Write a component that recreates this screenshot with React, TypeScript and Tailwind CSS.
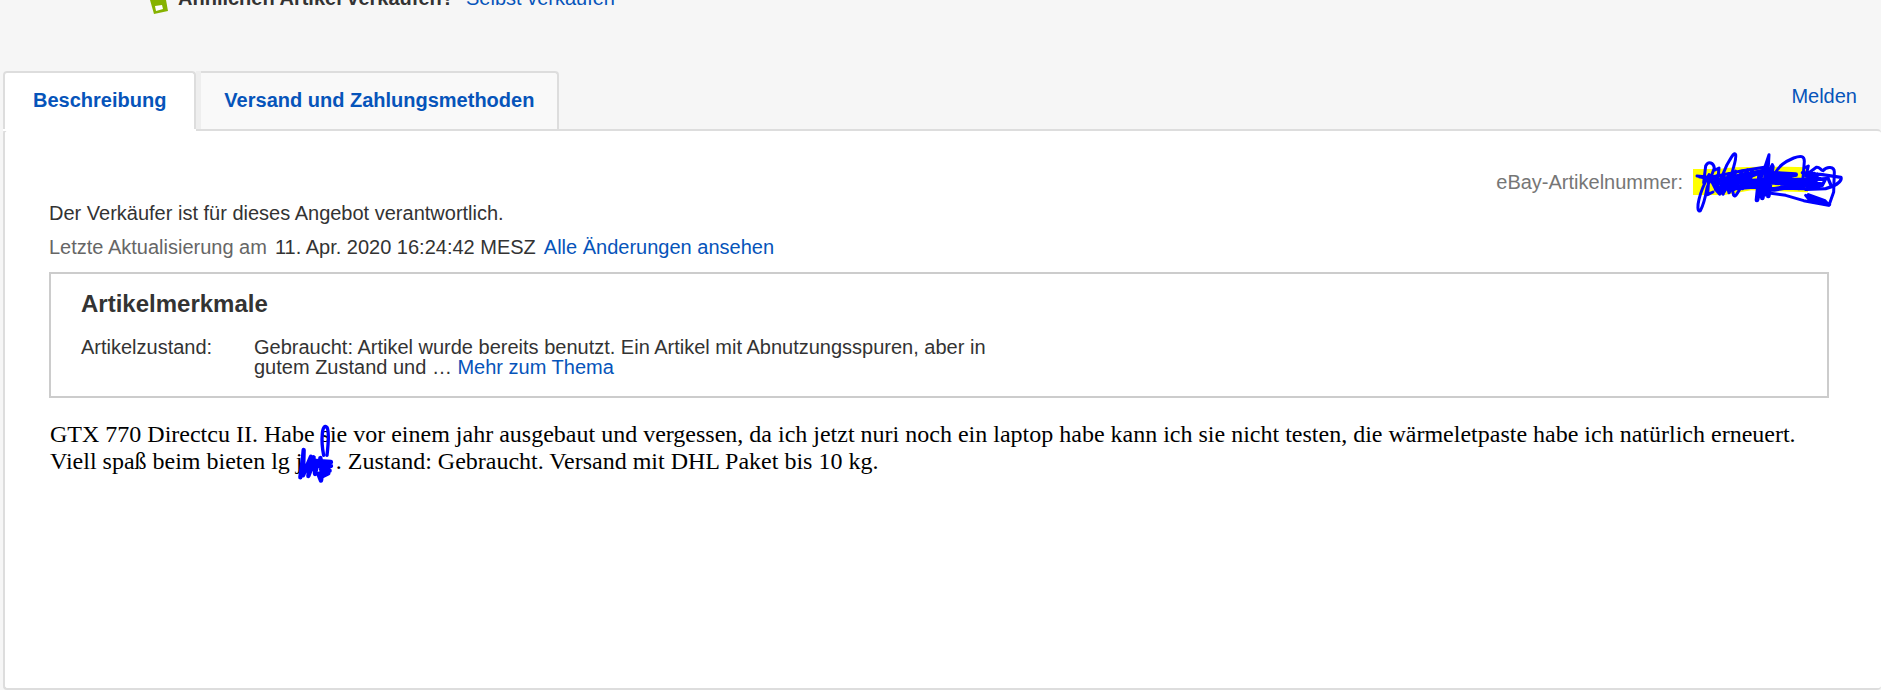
const tabBase = "flex h-full items-center border-2 border-b-0 border-[#ddd] pb-0.5 font-bold text-[#0654ba]";

// Item number, blacked out with a marker
function HiddenNumber() {
  return (
    <svg className="h-[66px] w-[158px]" viewBox="0 0 474 198" fill="none" aria-hidden="true">
      <path d="M12 63h75l50-5 80-2h75l65 2v75l-90-3-80-3-80 14H12z" fill="#ff0" />
      <g stroke="#00f" strokeLinecap="round" strokeLinejoin="round">
        <path
          strokeWidth="9"
          d="M24 84l40 4 50-10 46-10 66-10M30 86l40 8 60-4M44 104l6-50c8-16 24-10 26 6L54 120c-4 22-8 46-20 68-10 6-8-18-4-34 6-26 14-44 30-74l-4 60 16-8M60 84l20 40M78 66l12-6-6 60 30-70c12-20 22-40 26-30 4 16-14 54-16 80l10 42c6 10 18-22 26-30"
        />
        <path
          strokeWidth="10"
          d="M84 84l-4 40 12 14 10-54 0 54 18-60-14 52 34-60-20 64 40-64-24 54 40-58-16 56 30-54-10 46M76 100l20 32 10-44 14 44 6-56 20 38"
        />
        <path
          strokeWidth="9"
          d="M256 78c16-26 30-36 58-48 22-8 32-6 32 10l-4 50M262 72l40 16M346 60l12-6-6 26 30-22c10-2 12 8 20 10 12-14 34-12 34 4l-2 60-14 40-60-18-10-12 26 8 46 20M358 140l50 18 12 14M418 172l-74-14-54-16-56-8"
        />
        <path
          strokeWidth="10"
          d="M340 74l60 6 56 8c4 14-22 28-46 34l-60 2M360 96l50-4-10 20-46 4M416 88l10 24M376 76l8 44M350 84l44 8-34 12 40 4M354 74l20 44 12-40"
        />
        <path
          strokeWidth="14"
          d="M110 92l110-22-90 34 100-8-90 24 90-8M212 80l-8 76 14-60 2 54 14-90v80l16-84-12 88M236 84l80-4-64 14 96 2-90 8 110 4-90 10 66 2M240 104l120-8-30 24M250 76l70 4M226 120l30 4 60-10"
        />
        <path strokeWidth="9" d="M218 86l22-66-4 70 14-40-8 60" />
      </g>
    </svg>
  );
}

function HiddenName() {
  return (
    <span className="relative inline-block w-[34px]">
      j
      <svg className="absolute -top-7 -left-[5px] h-16 w-[50px]" viewBox="0 0 150 192" fill="none" aria-hidden="true">
        <g stroke="#00f" strokeLinecap="round" strokeLinejoin="round">
          <path strokeWidth="10" d="M98 106c-4-20-6-46-4-66 2-20 8-24 14-18 6 12 4 50 0 84" />
          <path
            strokeWidth="13"
            d="M28 172l8-60 2-22-2 76 24-56-8 58 18-48 2 42 8-36 38 0-32 12 34 0-30 10 26 4-30 8 26 0-20 10-2 12-8-20 14 2M60 112l-6 50 14-50M64 122l56 4M88 114l8 40"
          />
        </g>
      </svg>
    </span>
  );
}

export default function App() {
  return (
    <div className="bg-[#f6f6f6] font-['Liberation_Sans',Arial,sans-serif] text-[20px] leading-5 text-[#333]">
      <header className="flex h-[71px] items-start overflow-hidden pl-[150px]">
        <svg className="h-[14px] w-5" viewBox="0 0 20 14" aria-hidden="true">
          <path d="M0 0h16l2 11-14 3z" fill="#86b200" />
          <path d="M5 6l7-1 1 4-7 2z" fill="#fff" />
        </svg>
        <div className="-mt-3 flex gap-3 pl-2">
          <strong>Ähnlichen Artikel verkaufen?</strong>
          <a href="#verkaufen" className="text-[#0654ba]">Selbst verkaufen</a>
        </div>
      </header>

      <nav className="flex h-[58px] items-stretch justify-between pr-6 pl-[3px]">
        <div className="flex">
          <div className="relative z-10 -mb-0.5 rounded-t bg-white pb-0.5">
            <a href="#beschreibung" className={`${tabBase} rounded-t px-7`}>Beschreibung</a>
          </div>
          <div className="rounded-tr border-l-[5px] border-[#eee] bg-[#f9f9f9]">
            <a href="#versand" className={`${tabBase} rounded-tr border-l-0 px-[23px]`}>Versand und Zahlungsmethoden</a>
          </div>
        </div>
        <a href="#melden" className="pt-[15px] text-[#0654ba]">Melden</a>
      </nav>

      <main className="ml-[3px] min-h-[561px] rounded border-2 border-r-0 border-[#ddd] bg-white pr-[52px] pl-11">
        <div className="flex h-[72px] justify-end">
          <span className="pt-[41px] text-[#767676]">eBay-Artikelnummer:</span>
          <div className="-mr-[18px] ml-[6px] pt-[17px]">
            <HiddenNumber />
          </div>
        </div>
        <p>Der Verkäufer ist für dieses Angebot verantwortlich.</p>
        <p className="mt-[14px] flex gap-2">
          <span className="text-[#666]">Letzte Aktualisierung am</span>
          <span>11. Apr. 2020 16:24:42 MESZ</span>
          <a href="#aenderungen" className="text-[#0654ba]">Alle Änderungen ansehen</a>
        </p>

        <section className="mt-[15px] h-[126px] border-2 border-[#ccc] px-[30px] pt-[14px]">
          <h2 className="text-[24px] leading-8 font-bold">Artikelmerkmale</h2>
          <dl className="mt-[17px] flex">
            <dt className="w-[173px] shrink-0">Artikelzustand:</dt>
            <dd className="w-[750px]">
              Gebraucht: Artikel wurde bereits benutzt. Ein Artikel mit Abnutzungsspuren, aber in gutem Zustand und …{" "}
              <a href="#thema" className="text-[#0654ba]">Mehr zum Thema</a>
            </dd>
          </dl>
        </section>

        <p className="mt-[23px] pl-px font-['Liberation_Serif','Times_New_Roman',serif] text-[24px] leading-[27px] text-black">
          GTX 770 Directcu II. Habe sie vor einem jahr ausgebaut und vergessen, da ich jetzt nuri noch ein laptop habe
          kann ich sie nicht testen, die wärmeletpaste habe ich natürlich erneuert. Viell spaß beim bieten lg{" "}
          <HiddenName /> . Zustand: Gebraucht. Versand mit DHL Paket bis 10 kg.
        </p>
      </main>
    </div>
  );
}
